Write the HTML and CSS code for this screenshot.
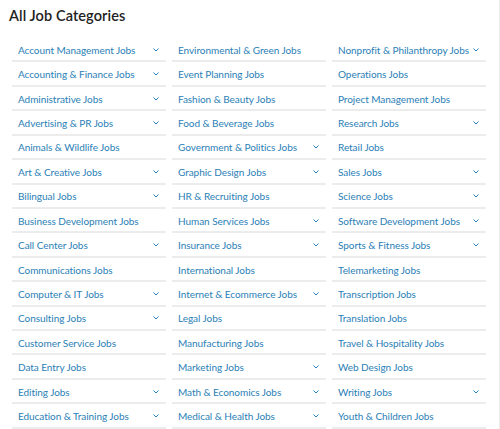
FILE: index.html
```html
<!DOCTYPE html>
<html lang="en">
<head>
<meta charset="utf-8">
<title>All Job Categories</title>
<link rel="stylesheet" href="styles.css">
</head>
<body>
<h2 class="title">All Job Categories</h2>
<div class="grid">
  <ul class="col">
    <li class="item"><a>Account Management Jobs</a><svg class="chev" viewBox="0 0 6 4"><polyline points="0.5,0.5 3,3 5.5,0.5"/></svg></li>
    <li class="item"><a>Accounting &amp; Finance Jobs</a><svg class="chev" viewBox="0 0 6 4"><polyline points="0.5,0.5 3,3 5.5,0.5"/></svg></li>
    <li class="item"><a>Administrative Jobs</a><svg class="chev" viewBox="0 0 6 4"><polyline points="0.5,0.5 3,3 5.5,0.5"/></svg></li>
    <li class="item"><a>Advertising &amp; PR Jobs</a><svg class="chev" viewBox="0 0 6 4"><polyline points="0.5,0.5 3,3 5.5,0.5"/></svg></li>
    <li class="item"><a>Animals &amp; Wildlife Jobs</a></li>
    <li class="item"><a>Art &amp; Creative Jobs</a><svg class="chev" viewBox="0 0 6 4"><polyline points="0.5,0.5 3,3 5.5,0.5"/></svg></li>
    <li class="item"><a>Bilingual Jobs</a><svg class="chev" viewBox="0 0 6 4"><polyline points="0.5,0.5 3,3 5.5,0.5"/></svg></li>
    <li class="item"><a>Business Development Jobs</a></li>
    <li class="item"><a>Call Center Jobs</a><svg class="chev" viewBox="0 0 6 4"><polyline points="0.5,0.5 3,3 5.5,0.5"/></svg></li>
    <li class="item"><a>Communications Jobs</a></li>
    <li class="item"><a>Computer &amp; IT Jobs</a><svg class="chev" viewBox="0 0 6 4"><polyline points="0.5,0.5 3,3 5.5,0.5"/></svg></li>
    <li class="item"><a>Consulting Jobs</a><svg class="chev" viewBox="0 0 6 4"><polyline points="0.5,0.5 3,3 5.5,0.5"/></svg></li>
    <li class="item"><a>Customer Service Jobs</a></li>
    <li class="item"><a>Data Entry Jobs</a></li>
    <li class="item"><a>Editing Jobs</a><svg class="chev" viewBox="0 0 6 4"><polyline points="0.5,0.5 3,3 5.5,0.5"/></svg></li>
    <li class="item"><a>Education &amp; Training Jobs</a><svg class="chev" viewBox="0 0 6 4"><polyline points="0.5,0.5 3,3 5.5,0.5"/></svg></li>
  </ul>
  <ul class="col">
    <li class="item"><a>Environmental &amp; Green Jobs</a></li>
    <li class="item"><a>Event Planning Jobs</a></li>
    <li class="item"><a>Fashion &amp; Beauty Jobs</a></li>
    <li class="item"><a>Food &amp; Beverage Jobs</a></li>
    <li class="item"><a>Government &amp; Politics Jobs</a><svg class="chev" viewBox="0 0 6 4"><polyline points="0.5,0.5 3,3 5.5,0.5"/></svg></li>
    <li class="item"><a>Graphic Design Jobs</a><svg class="chev" viewBox="0 0 6 4"><polyline points="0.5,0.5 3,3 5.5,0.5"/></svg></li>
    <li class="item"><a>HR &amp; Recruiting Jobs</a></li>
    <li class="item"><a>Human Services Jobs</a><svg class="chev" viewBox="0 0 6 4"><polyline points="0.5,0.5 3,3 5.5,0.5"/></svg></li>
    <li class="item"><a>Insurance Jobs</a><svg class="chev" viewBox="0 0 6 4"><polyline points="0.5,0.5 3,3 5.5,0.5"/></svg></li>
    <li class="item"><a>International Jobs</a></li>
    <li class="item"><a>Internet &amp; Ecommerce Jobs</a><svg class="chev" viewBox="0 0 6 4"><polyline points="0.5,0.5 3,3 5.5,0.5"/></svg></li>
    <li class="item"><a>Legal Jobs</a></li>
    <li class="item"><a>Manufacturing Jobs</a></li>
    <li class="item"><a>Marketing Jobs</a><svg class="chev" viewBox="0 0 6 4"><polyline points="0.5,0.5 3,3 5.5,0.5"/></svg></li>
    <li class="item"><a>Math &amp; Economics Jobs</a><svg class="chev" viewBox="0 0 6 4"><polyline points="0.5,0.5 3,3 5.5,0.5"/></svg></li>
    <li class="item"><a>Medical &amp; Health Jobs</a><svg class="chev" viewBox="0 0 6 4"><polyline points="0.5,0.5 3,3 5.5,0.5"/></svg></li>
  </ul>
  <ul class="col">
    <li class="item"><a>Nonprofit &amp; Philanthropy Jobs</a><svg class="chev" viewBox="0 0 6 4"><polyline points="0.5,0.5 3,3 5.5,0.5"/></svg></li>
    <li class="item"><a>Operations Jobs</a></li>
    <li class="item"><a>Project Management Jobs</a></li>
    <li class="item"><a>Research Jobs</a><svg class="chev" viewBox="0 0 6 4"><polyline points="0.5,0.5 3,3 5.5,0.5"/></svg></li>
    <li class="item"><a>Retail Jobs</a></li>
    <li class="item"><a>Sales Jobs</a><svg class="chev" viewBox="0 0 6 4"><polyline points="0.5,0.5 3,3 5.5,0.5"/></svg></li>
    <li class="item"><a>Science Jobs</a><svg class="chev" viewBox="0 0 6 4"><polyline points="0.5,0.5 3,3 5.5,0.5"/></svg></li>
    <li class="item"><a>Software Development Jobs</a><svg class="chev" viewBox="0 0 6 4"><polyline points="0.5,0.5 3,3 5.5,0.5"/></svg></li>
    <li class="item"><a>Sports &amp; Fitness Jobs</a><svg class="chev" viewBox="0 0 6 4"><polyline points="0.5,0.5 3,3 5.5,0.5"/></svg></li>
    <li class="item"><a>Telemarketing Jobs</a></li>
    <li class="item"><a>Transcription Jobs</a></li>
    <li class="item"><a>Translation Jobs</a></li>
    <li class="item"><a>Travel &amp; Hospitality Jobs</a></li>
    <li class="item"><a>Web Design Jobs</a></li>
    <li class="item"><a>Writing Jobs</a><svg class="chev" viewBox="0 0 6 4"><polyline points="0.5,0.5 3,3 5.5,0.5"/></svg></li>
    <li class="item"><a>Youth &amp; Children Jobs</a></li>
  </ul>
</div>
</body>
</html>
```
FILE: styles.css
```css
html, body {
  margin: 0;
  padding: 0;
  background: #ffffff;
}
body {
  font-family: "Lato", "Liberation Sans", sans-serif;
  border-right: 1px solid #ececec;
  box-sizing: border-box;
  width: 500px;
  height: 429px;
  overflow: hidden;
}
.title {
  margin: 0;
  padding: 7px 0 0 9px;
  height: 31px;
  box-sizing: border-box;
  font-size: 14.5px;
  font-weight: 600;
  color: #222222;
  letter-spacing: 0.1px;
}
.grid {
  display: grid;
  grid-template-columns: repeat(3, 154px);
  column-gap: 6px;
  padding: 7px 0 0 12px;
}
.col {
  list-style: none;
  margin: 0;
  padding: 0;
}
.item {
  display: flex;
  align-items: center;
  justify-content: space-between;
  height: 24.43px;
  box-sizing: border-box;
  padding: 1px 6px 0 6px;
  border-bottom: 2px solid #ececec;
  font-size: 10px;
  letter-spacing: -0.05px;
  color: #2a80b6;
}
.item a {
  white-space: nowrap;
}
.chev {
  width: 6px;
  height: 4px;
  margin-right: 1px;
  fill: none;
  stroke: #2a80b6;
  stroke-width: 1;
}
```
